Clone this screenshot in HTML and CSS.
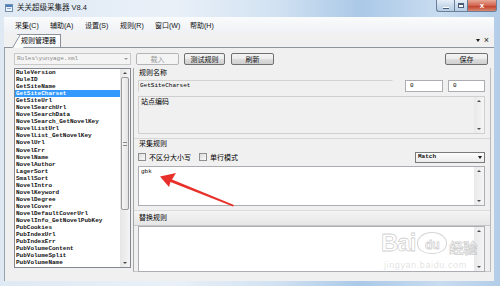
FILE: index.html
```html
<!DOCTYPE html>
<html lang="zh">
<head>
<meta charset="utf-8">
<title>关关超级采集器 V8.4</title>
<link rel="stylesheet" href="styles.css">
</head>
<body>
<div class="win">
  <div class="titlebar">
    <svg class="appicon" viewBox="0 0 8 8" width="8" height="8">
      <rect x="0.5" y="0.5" width="7" height="7" fill="#eef3f9" stroke="#6f8fb3"/>
      <rect x="1" y="1" width="6" height="2" fill="#4d7fc0"/>
      <rect x="2" y="4" width="4" height="1" fill="#8aa6c8"/>
    </svg>
    <span class="title">关关超级采集器 V8.4</span>
    <div class="caption">
      <span class="cb cb-min"><i class="g-min"></i></span>
      <span class="cb cb-max"><i class="g-max"></i></span>
      <span class="cb cb-close">x</span>
    </div>
  </div>
  <div class="client">
    <div class="menubar">
      <span class="mi">采集(C)</span>
      <span class="mi">辅助(A)</span>
      <span class="mi">设置(S)</span>
      <span class="mi">规则(R)</span>
      <span class="mi">窗口(W)</span>
      <span class="mi">帮助(H)</span>
    </div>
    <div class="tabstrip">
      <div class="tab">规则管理器</div>
      <span class="tabctl"><i class="tri-dn dark"></i><span class="tx">×</span></span>
    </div>
    <div class="dock">
      <div class="toolbar">
        <div class="combo dis"><span class="combo-text">Rules\yunyage.xml</span><i class="tri-dn grey"></i></div>
        <span class="btn dis b1">载入</span>
        <span class="btn b2">测试规则</span>
        <span class="btn b3">刷新</span>
        <span class="btn b4">保存</span>
      </div>
      <div class="main">
        <div class="listbox">
          <ul class="items">
            <li>RuleVersion</li>
            <li>RuleID</li>
            <li>GetSiteName</li>
            <li class="sel">GetSiteCharset</li>
            <li>GetSiteUrl</li>
            <li>NovelSearchUrl</li>
            <li>NovelSearchData</li>
            <li>NovelSearch_GetNovelKey</li>
            <li>NovelListUrl</li>
            <li>NovelList_GetNovelKey</li>
            <li>NovelUrl</li>
            <li>NovelErr</li>
            <li>NovelName</li>
            <li>NovelAuthor</li>
            <li>LagerSort</li>
            <li>SmallSort</li>
            <li>NovelIntro</li>
            <li>NovelKeyword</li>
            <li>NovelDegree</li>
            <li>NovelCover</li>
            <li>NovelDefaultCoverUrl</li>
            <li>NovelInfo_GetNovelPubKey</li>
            <li>PubCookies</li>
            <li>PubIndexUrl</li>
            <li>PubIndexErr</li>
            <li>PubVolumeContent</li>
            <li>PubVolumeSplit</li>
            <li>PubVolumeName</li>
          </ul>
          <div class="vscroll">
            <span class="sb-btn"><i class="tri-up"></i></span>
            <span class="sb-thumb"><i class="grip"></i></span>
            <span class="sb-track"></span>
            <span class="sb-btn"><i class="tri-dn"></i></span>
          </div>
        </div>
        <div class="editor">
          <div class="lbl lbl-name">规则名称</div>
          <div class="namerow">
            <div class="field ro">GetSiteCharset</div>
            <div class="field num n1">0</div>
            <div class="field num n2">0</div>
          </div>
          <div class="tbox gray charset">
            <div class="tbox-body cjk">站点编码</div>
            <div class="vs"><i class="tri-up"></i><i class="tri-dn"></i></div>
          </div>
          <div class="sep"></div>
          <div class="lbl lbl-rule">采集规则</div>
          <div class="optrow">
            <span class="chk"></span><span class="chklbl">不区分大小写</span>
            <span class="chk c2"></span><span class="chklbl">单行模式</span>
            <div class="combo match"><span class="combo-text">Match</span><i class="tri-dn dark"></i></div>
          </div>
          <div class="tbox rulebox">
            <div class="tbox-body mono">gbk</div>
            <div class="vs"><i class="tri-up"></i><i class="tri-dn"></i></div>
          </div>
          <div class="band">替换规则</div>
          <div class="tbox replbox">
            <div class="tbox-body"></div>
            <div class="vs"><i class="tri-up"></i><i class="tri-dn"></i></div>
          </div>
        </div>
      </div>
    </div>
  </div>
</div>

<svg class="redarrow" viewBox="0 0 500 286" width="500" height="286">
  <polygon fill="#e8302a" points="160,176.5 176,173 172,179.5 234,205 233,206.5 170.5,182 169,187"/>
</svg>

<div class="watermark">
  <div class="wm-top"><span class="wm-bai">Bai</span><span class="wm-du">du</span><span class="wm-jy">经验</span></div>
  <div class="wm-url">jingyan.baidu.com</div>
</div>
</body>
</html>
```

FILE: styles.css
```css
* { box-sizing: border-box; margin: 0; padding: 0; }
html, body { width: 500px; height: 286px; overflow: hidden; }
body {
  font: 7px/1 "Liberation Sans", "Noto Sans CJK SC", sans-serif;
  color: #000;
  background: linear-gradient(to right, #dfe9f4 0%, #e9f0f8 35%, #d2e2f2 55%, #aac9e7 72%, #c9dcf0 88%, #b3cde8 100%);
  position: relative;
}
ul { list-style: none; }
i { display: block; }

.win { display: flex; flex-direction: column; height: 286px; }

/* title bar */
.titlebar { height: 17px; flex: none; display: flex; align-items: flex-start; }
.appicon { margin: 4px 0 0 5px; flex: none; }
.title { margin-left: 4px; line-height: 16px; font-size: 7.5px; color: #1b1b1b; }
.caption { margin-left: auto; margin-right: 3px; display: flex; height: 12px; }
.cb {
  height: 12px; border: 1px solid #6b7f98; border-top: none;
  display: flex; align-items: center; justify-content: center;
  background: linear-gradient(#e6eef7, #cbdbec 50%, #b7cde4);
}
.cb-min { width: 18px; border-radius: 0 0 0 3px; border-right: none; }
.cb-max { width: 13px; border-right: none; }
.cb-close {
  width: 30px; border-radius: 0 0 3px 0;
  background: linear-gradient(#e9a898, #d0644f 50%, #c0402b 55%, #d88870);
  color: #fff; font: bold 8px/1 "Liberation Sans", sans-serif;
}
.g-min { width: 6px; height: 2px; background: #fff; border: 1px solid #4a5d76; border-width: 0 0 1px 0; margin-top: 4px; }
.g-max { width: 6px; height: 5px; border: 1px solid #4a5d76; border-top-width: 2px; background: #fff; }

/* client */
.client {
  flex: none; margin: 0 6px 0 4px; height: 264px;
  background: #f0f0f0; display: flex; flex-direction: column;
}
.menubar {
  height: 16px; flex: none; display: flex; align-items: center; padding-left: 5px;
  background: linear-gradient(#fafbfc, #eef1f5);
}
.mi { padding: 0 6px; width: 35px; white-space: nowrap; color: #111; }

.tabstrip {
  height: 15px; flex: none; display: flex; align-items: flex-end;
  border-bottom: 1px solid #8d949d; background: #f0f0f0;
}
.tab {
  position: relative; z-index: 0; margin-left: 13px; height: 13px; width: 44px;
  padding: 0 0 0 4px; line-height: 12px;
  background: linear-gradient(#ffffff, #f4f7fb);
  border: 1px solid #8a919a; border-left: none; border-bottom: none;
  white-space: nowrap;
}
.tab::before {
  content: ""; position: absolute; z-index: -1; left: -5px; top: -1px; width: 10px; height: 13px;
  background: #fff; border-left: 1px solid #8a919a; border-top: 1px solid #8a919a;
  transform: skewX(-30deg); transform-origin: bottom left;
}
.tabctl { margin-left: auto; margin-right: 5px; align-self: center; display: flex; align-items: center; gap: 4px; }
.tabctl .tx { font: 9px/1 "Liberation Sans", sans-serif; color: #222; }

.dock { flex: 1; display: flex; flex-direction: column; padding: 5px 6px 0 9px; border-left: 1px solid #9aa0a8; }

/* toolbar */
.toolbar { height: 12px; display: flex; flex: none; }
.combo {
  display: flex; align-items: center; border: 1px solid #abadb3; background: #fff;
  height: 12px; padding: 0 2px 0 2px;
}
.toolbar .combo { width: 117px; }
.combo.dis { background: #f4f4f4; border-color: #c9c9c9; color: #8a8a8a; }
.combo-text { flex: 1; font: 6px/1 "Liberation Mono", monospace; white-space: nowrap; }
.btn {
  height: 12px; display: flex; align-items: center; justify-content: center;
  border: 1px solid #707070; border-radius: 2px;
  background: linear-gradient(#f4f4f4, #ebebeb 50%, #dddddd 51%, #cfcfcf);
  color: #111;
}
.btn.dis { border-color: #b5b5b5; background: #f4f4f4; color: #9a9a9a; }
.b1 { margin-left: 5px; width: 43px; }
.b2 { margin-left: 5px; width: 41px; }
.b3 { margin-left: 6px; width: 43px; }
.b4 { margin-left: auto; width: 43px; }

/* triangles */
.tri-up, .tri-dn { width: 0; height: 0; border-left: 2px solid transparent; border-right: 2px solid transparent; }
.tri-up { border-bottom: 2px solid #4d4d4d; }
.tri-dn { border-top: 2px solid #4d4d4d; }
.tri-dn.grey { border-top-color: #9a9a9a; }
.tri-dn.dark { border-left-width: 2.5px; border-right-width: 2.5px; border-top: 3px solid #1a1a1a; }

/* main */
.main { display: flex; margin-top: 3px; height: 204px; }
.listbox {
  width: 117px; height: 200px; flex: none; display: flex;
  border: 1px solid #828790; background: #fff;
}
.items {
  flex: 1; overflow: hidden;
  font: bold 6px/7.05px "Liberation Mono", monospace; color: #111;
}
.items li { padding-left: 1px; height: 7.05px; white-space: nowrap; }
.items li.sel { background: #3399ff; color: #fff; }
.vscroll {
  width: 10px; flex: none; display: flex; flex-direction: column;
  background: linear-gradient(to right, #e6e6e6, #f4f4f4);
}
.sb-btn { height: 8px; display: flex; align-items: center; justify-content: center; flex: none; }
.sb-thumb {
  height: 133px; margin: 0 1px; flex: none; border: 1px solid #9a9a9a; border-radius: 2px;
  background: linear-gradient(to right, #f6f6f6, #e3e3e3);
  display: flex; align-items: center; justify-content: center;
}
.grip { width: 4px; height: 4px; border-top: 1px solid #8a8a8a; border-bottom: 1px solid #8a8a8a; }
.sb-track { flex: 1; }

/* editor */
.editor {
  width: 358px; margin-left: 2px; height: 204px; flex: none;
  border-left: 1px solid #a7a7a7; border-right: 1px solid #b9b9b9; border-bottom: 1px solid #c9c9c9;
  padding-left: 4px; display: flex; flex-direction: column;
}
.lbl { padding-left: 1px; white-space: nowrap; flex: none; }
.lbl-name { height: 12px; line-height: 9px; }
.namerow { display: flex; height: 12px; flex: none; }
.field {
  height: 12px; border: 1px solid #abadb3; background: #fff;
  font: 6px/10px "Liberation Mono", monospace; padding-left: 1px; white-space: nowrap;
}
.field.ro { width: 255px; background: #f0f0f0; border-color: #d2d2d2 #f0f0f0 #f0f0f0 #d2d2d2; }
.field.num { padding-left: 4px; }
.n1 { width: 38px; margin-left: 12px; }
.n2 { width: 37px; margin-left: 5px; }

.tbox { display: flex; width: 347px; border: 1px solid #abadb3; background: #fff; flex: none; }
.tbox.gray { background: #f0f0f0; border-color: #cfcfcf; }
.tbox-body { flex: 1; padding: 1px 2px; }
.tbox-body.mono { font: 6px/8px "Liberation Mono", monospace; padding: 1px 2px; }
.vs {
  width: 10px; flex: none; display: flex; flex-direction: column; justify-content: space-between;
  align-items: center; padding: 3px 0; background: linear-gradient(to right, #e9e9e9, #f5f5f5);
}
.charset { margin-top: 4px; height: 38px; }
.sep { margin-top: 4px; height: 1px; background: #d6d6d6; margin-left: -4px; flex: none; }
.lbl-rule { height: 12px; line-height: 10px; }
.optrow { display: flex; align-items: center; height: 12px; flex: none; }
.chk {
  width: 8px; height: 8px; border: 1px solid #8f8f8f; flex: none;
  background: linear-gradient(135deg, #dcdcdc, #fafafa);
}
.chklbl { margin-left: 3px; white-space: nowrap; }
.c2 { margin-left: 8px; }
.combo.match {
  margin-left: auto; margin-right: 5px; width: 70px; height: 11px;
  border-color: #7a7a7a; background: linear-gradient(#fdfdfd, #ececec);
}
.combo.match .combo-text { font-weight: bold; color: #111; }
.rulebox { margin-top: 3px; height: 40px; }
.band {
  margin-top: 4px; height: 16px; flex: none; line-height: 14px;
  margin-left: -4px; padding-left: 5px;
  background: linear-gradient(#f4f4f4, #e6e6e6);
  border-top: 1px solid #dcdcdc; border-bottom: 1px solid #c7c7c7;
}
.replbox { height: 46px; }

/* overlays */
.redarrow { position: absolute; left: 0; top: 0; pointer-events: none; }
.watermark {
  position: absolute; left: 381px; top: 231px; color: rgba(255,255,255,0.55);
  -webkit-text-stroke: 0.8px rgba(150,150,150,0.45);
  pointer-events: none; font-family: "Liberation Sans", "Noto Sans CJK SC", sans-serif;
}
.wm-top { display: flex; align-items: flex-end; }
.wm-bai { font: bold 24px/1 "Liberation Sans", sans-serif; letter-spacing: -1px; }
.wm-du {
  font: bold 12px/1 "Liberation Sans", sans-serif; margin-left: 2px; margin-bottom: 1px;
  width: 30px; height: 22px; border-radius: 50% 50% 45% 45%;
  border: 1.5px solid rgba(150,150,150,0.4); display: flex; align-items: flex-end; justify-content: center; padding-bottom: 2px;
}
.wm-jy { font: bold 14px/1 "Noto Sans CJK SC", sans-serif; margin-left: 2px; margin-bottom: 1px; }
.wm-url { font: 9px/1 "Liberation Sans", sans-serif; margin-top: 6px; margin-left: 3px; letter-spacing: 0.6px; -webkit-text-stroke: 0; color: rgba(150,150,150,0.3); }
```
